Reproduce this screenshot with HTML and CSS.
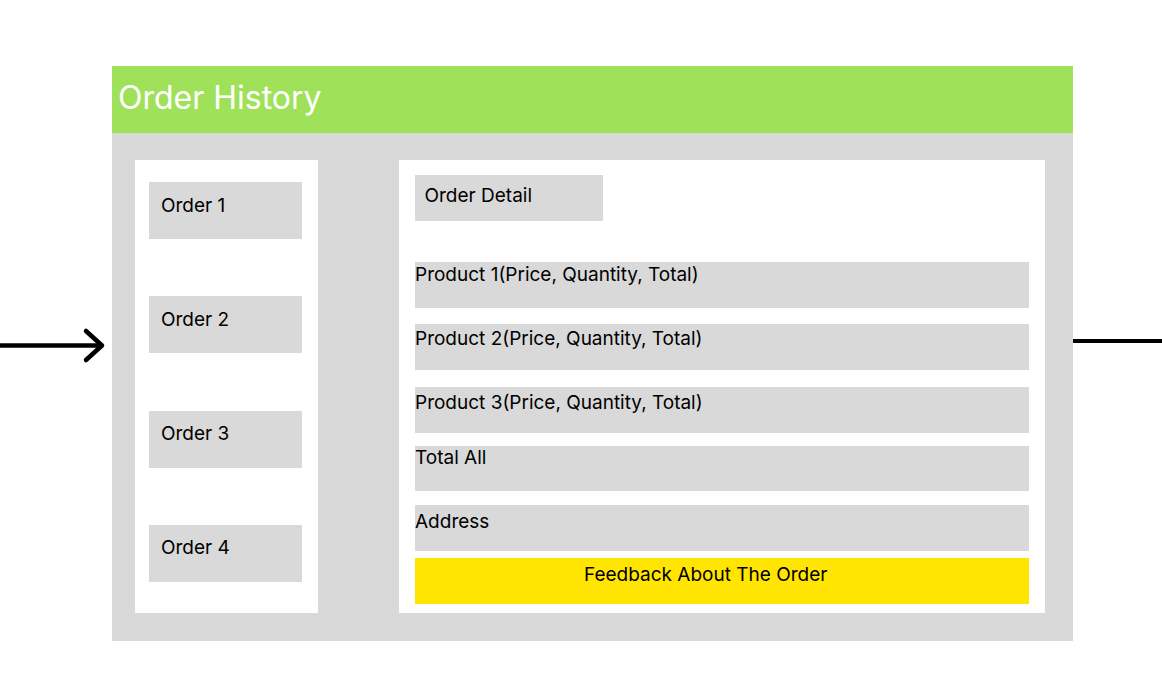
FILE: index.html
```html
<!DOCTYPE html>
<html lang="en">
<head>
<meta charset="utf-8">
<title>Order History</title>
<link rel="stylesheet" href="styles.css">
</head>
<body>
<div class="canvas">
  <svg class="arrow-in" width="110" height="40" viewBox="0 0 110 40" aria-hidden="true">
    <path d="M0 18.5 H101" stroke="#000" stroke-width="4.5" fill="none"/>
    <path d="M86 4 L102 18.5 L86 33" stroke="#000" stroke-width="4.5" fill="none" stroke-linecap="round" stroke-linejoin="round"/>
  </svg>
  <div class="arrow-out"></div>

  <section class="frame">
    <header class="frame-header">Order History</header>
    <div class="frame-body">
      <div class="orders">
        <div class="order">Order 1</div>
        <div class="order">Order 2</div>
        <div class="order">Order 3</div>
        <div class="order">Order 4</div>
      </div>
      <div class="detail">
        <div class="detail-title">Order Detail</div>
        <div class="rows">
          <div class="row row-p1">Product 1(Price, Quantity, Total)</div>
          <div class="row row-p2">Product 2(Price, Quantity, Total)</div>
          <div class="row row-p3">Product 3(Price, Quantity, Total)</div>
          <div class="row row-total">Total All</div>
          <div class="row row-address">Address</div>
          <div class="row row-feedback">Feedback About The Order</div>
        </div>
      </div>
    </div>
  </section>
</div>
</body>
</html>
```

FILE: styles.css
```css
* { box-sizing: border-box; }

html, body {
  margin: 0;
  padding: 0;
  background: #ffffff;
}

body {
  font-family: Inter, "Noto Sans", "Liberation Sans", sans-serif;
  color: #000;
}

.canvas {
  position: relative;
  width: 1162px;
  height: 697px;
  padding-top: 66px;
  padding-left: 112px;
  overflow: hidden;
}

.arrow-in {
  position: absolute;
  left: 0;
  top: 327px;
}

.arrow-out {
  position: absolute;
  left: 1073px;
  top: 338.5px;
  width: 89px;
  height: 4.5px;
  background: #000;
}

.frame {
  width: 961px;
  display: flex;
  flex-direction: column;
}

.frame-header {
  height: 67px;
  background: #9fe25a;
  color: #ffffff;
  font-size: 32px;
  line-height: 39px;
  padding: 12px 0 0 6px;
  font-weight: 400;
}

.frame-body {
  background: #d9d9d9;
  height: 508px;
  padding: 27px 28px 28px 23px;
  display: flex;
  gap: 81px;
}

.orders {
  width: 183px;
  height: 453px;
  background: #fff;
  padding: 22px 0 0 14px;
  display: flex;
  flex-direction: column;
  gap: 57.33px;
}

.order {
  width: 153px;
  height: 57px;
  background: #d9d9d9;
  font-size: 19px;
  line-height: 23px;
  padding: 11.5px 0 0 12px;
}

.detail {
  width: 646px;
  height: 453px;
  background: #fff;
  padding: 15px 0 0 16px;
  display: flex;
  flex-direction: column;
}

.detail-title {
  width: 188px;
  height: 46px;
  background: #d9d9d9;
  font-size: 19px;
  line-height: 23px;
  padding: 9px 0 0 9.5px;
}

.rows {
  margin-top: 41px;
  display: flex;
  flex-direction: column;
}

.row {
  width: 614px;
  height: 45.7px;
  background: #d9d9d9;
  font-size: 19px;
  line-height: 23px;
}

.row-p1 { padding-top: 1px; }
.row-p2 { margin-top: 16.6px; padding-top: 2.5px; }
.row-p3 { margin-top: 17px; padding-top: 4.5px; }
.row-total { margin-top: 13px; padding-top: 0.5px; }
.row-address { margin-top: 13.6px; padding-top: 5px; }

.row-feedback {
  margin-top: 7.3px;
  background: #ffe500;
  padding-top: 5px;
  padding-left: 169px;
}
```
